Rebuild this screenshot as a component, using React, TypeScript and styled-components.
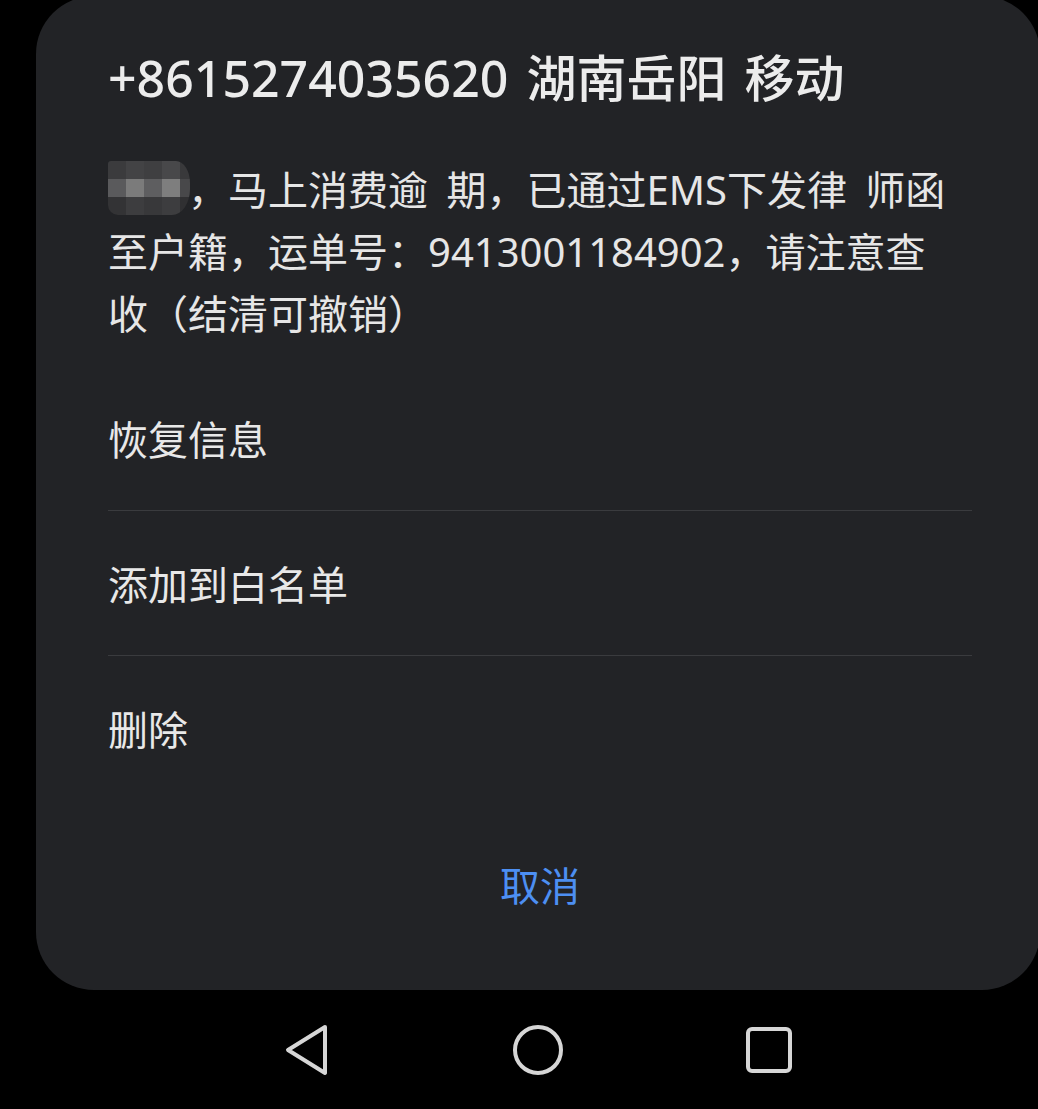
import styled, { createGlobalStyle } from "styled-components";

const GlobalStyle = createGlobalStyle`
  html, body {
    margin: 0;
    padding: 0;
    background: #000000;
  }
`;

const FONT = `"Noto Sans", "Noto Sans CJK SC", sans-serif`;

// pixelated name, 5 columns x 3 rows
const mosaicColors = [
  "#3b3b3d", "#434345", "#3f3f41", "#48484a", "#39393b",
  "#5a5a5c", "#7b7b7b", "#5e5e60", "#7e7e7e", "#48484a",
  "#333335", "#3d3d3f", "#38383a", "#3d3d3f", "#303032",
];

const actions = ["恢复信息", "添加到白名单", "删除"];

const App: React.FC = () => {
  return (
    <>
      <GlobalStyle />
      <Screen>
        <Sheet>
          <Title>+8615274035620 湖南岳阳 移动</Title>
          <Message>
            <Mosaic>
              <MosaicGrid>
                {mosaicColors.map((c, i) => (
                  <MosaicCell key={i} $color={c} />
                ))}
              </MosaicGrid>
            </Mosaic>
            ，马上消费逾 期，已通过EMS下发律 师函
            <br />
            至户籍，运单号：9413001184902，请注意查
            <br />
            收（结清可撤销）
          </Message>
          <ActionList>
            {actions.map((a) => (
              <ActionItem key={a}>{a}</ActionItem>
            ))}
          </ActionList>
          <CancelButton>取消</CancelButton>
        </Sheet>
        <NavBar>
          <NavKey>
            <svg width="46" height="52" viewBox="0 0 46 52">
              <path
                d="M41 3 L4 26 L41 49 Z"
                fill="none"
                stroke="#d6d6d6"
                strokeWidth="4"
                strokeLinejoin="round"
              />
            </svg>
          </NavKey>
          <NavKey>
            <svg width="54" height="54" viewBox="0 0 54 54">
              <circle cx="27" cy="27" r="23" fill="none" stroke="#d6d6d6" strokeWidth="4" />
            </svg>
          </NavKey>
          <NavKey>
            <svg width="50" height="50" viewBox="0 0 50 50">
              <rect
                x="4"
                y="4"
                width="42"
                height="42"
                rx="4"
                fill="none"
                stroke="#d6d6d6"
                strokeWidth="4"
              />
            </svg>
          </NavKey>
        </NavBar>
      </Screen>
    </>
  );
};

const Screen = styled.div`
  width: 1038px;
  height: 1109px;
  overflow: hidden;
  background: #000000;
  display: flex;
  flex-direction: column;
  font-family: ${FONT};
`;

const Sheet = styled.div`
  flex-shrink: 0;
  box-sizing: border-box;
  width: 1004px;
  height: 994px;
  margin: -4px 0 0 36px;
  padding: 52px 68px 0 72px;
  border-radius: 58px;
  background: #222326;
  display: flex;
  flex-direction: column;
`;

const Title = styled.div`
  font-size: 50px;
  line-height: 60px;
  font-weight: 500;
  color: #ececec;
  white-space: nowrap;
  word-spacing: 5px;
`;

const Message = styled.div`
  margin-top: 51px;
  font-size: 40px;
  line-height: 62px;
  color: #e6e6e6;
  white-space: nowrap;
  word-spacing: 8px;
`;

const Mosaic = styled.span`
  display: inline-block;
  width: 82px;
  height: 54px;
  vertical-align: -10px;
  margin-right: -2px;
  overflow: hidden;
  border-radius: 3px 14px 18px 10px / 3px 22px 26px 10px;
  filter: blur(0.6px);
`;

const MosaicGrid = styled.span`
  display: grid;
  grid-template-columns: repeat(4, 18px) 10px;
  grid-template-rows: repeat(3, 18px);
`;

const MosaicCell = styled.span<{ $color: string }>`
  background: ${(p) => p.$color};
`;

const ActionList = styled.div`
  margin-top: 21px;
  display: flex;
  flex-direction: column;
`;

const ActionItem = styled.div`
  height: 144px;
  display: flex;
  align-items: center;
  font-size: 40px;
  color: #e8e8e8;

  & + & {
    border-top: 1px solid #3a3b3e;
  }
`;

const CancelButton = styled.button`
  margin-top: 44px;
  height: 80px;
  display: flex;
  align-items: center;
  justify-content: center;
  padding: 0;
  border: none;
  background: none;
  font-family: ${FONT};
  font-size: 40px;
  color: #4d8ff2;
  cursor: pointer;
`;

const NavBar = styled.nav`
  flex: 1;
  width: 1004px;
  margin-left: 36px;
  display: flex;
  justify-content: center;
  align-items: center;
`;

const NavKey = styled.div`
  width: 231px;
  display: flex;
  justify-content: center;
  align-items: center;
`;

export default App;
